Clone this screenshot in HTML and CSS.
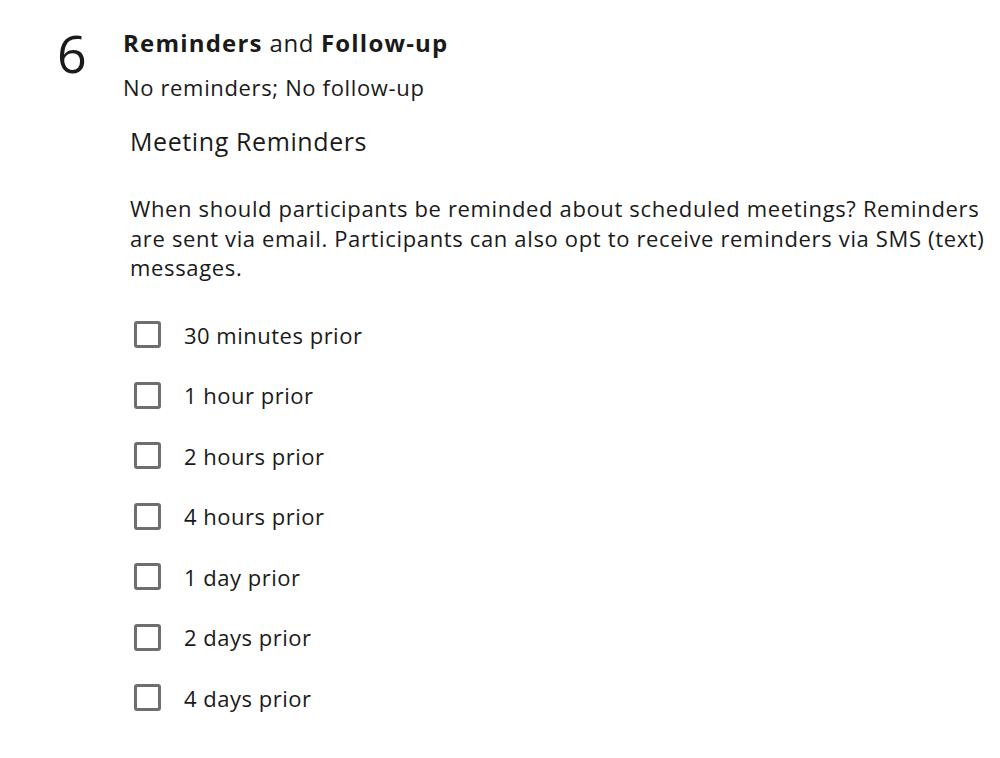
FILE: index.html
```html
<!DOCTYPE html>
<html lang="en">
  <head>
    <meta charset="UTF-8" />
    <title>Reminders and Follow-up</title>
    <link rel="stylesheet" href="styles.css">
  </head>
  <body>
    <div class="step">
      <div class="step-num">6</div>
      <div class="step-body">
        <h2 class="step-title"><b>Reminders</b> and <b>Follow-up</b></h2>
        <div class="step-summary">No reminders; No follow-up</div>

        <div class="section">
          <h3>Meeting Reminders</h3>
          <p class="help">When should participants be reminded about scheduled meetings? Reminders are sent via email. Participants can also opt to receive reminders via SMS (text) messages.</p>

          <div class="options">
            <label class="option"><input type="checkbox"><span>30 minutes prior</span></label>
            <label class="option"><input type="checkbox"><span>1 hour prior</span></label>
            <label class="option"><input type="checkbox"><span>2 hours prior</span></label>
            <label class="option"><input type="checkbox"><span>4 hours prior</span></label>
            <label class="option"><input type="checkbox"><span>1 day prior</span></label>
            <label class="option"><input type="checkbox"><span>2 days prior</span></label>
            <label class="option"><input type="checkbox"><span>4 days prior</span></label>
          </div>
        </div>
      </div>
    </div>
  </body>
</html>
```

FILE: styles.css
```css
body {
  margin: 0;
  padding: 0;
  background: #fff;
  color: #1a1a1a;
  font-family: "Open Sans", Arial, sans-serif;
}

.step {
  display: flex;
  padding: 24px 0 0 57px;
}

.step-num {
  width: 66px;
  font-size: 52px;
  line-height: 58px;
  font-weight: 400;
}

.step-body {
  flex: 1;
  min-width: 0;
}

.step-title {
  margin: 4px 0 0;
  font-size: 24px;
  font-weight: 400;
  line-height: 30px;
  letter-spacing: 0.6px;
}

.step-title b {
  font-weight: 700;
  letter-spacing: 1.2px;
}

.step-summary {
  margin-top: 14px;
  font-size: 22px;
  line-height: 30px;
  letter-spacing: 0.65px;
}

.section {
  padding-left: 7px;
  padding-right: 8px;
}

.section h3 {
  margin: 22px 0 0;
  font-size: 25px;
  font-weight: 400;
  line-height: 34px;
  letter-spacing: 0.6px;
}

.help {
  margin: 36px 0 0;
  font-size: 22px;
  line-height: 29.5px;
  letter-spacing: 0.65px;
}

.options {
  display: flex;
  flex-direction: column;
  gap: 32.5px;
  margin-top: 38px;
}

.option {
  display: flex;
  align-items: center;
  gap: 23px;
  font-size: 22px;
  line-height: 28px;
  letter-spacing: 0.5px;
}

.option input {
  appearance: none;
  margin: 0 0 0 4px;
  width: 27px;
  height: 27px;
  border: 3px solid #6e6e6e;
  border-radius: 3px;
  background: #fff;
}
```
